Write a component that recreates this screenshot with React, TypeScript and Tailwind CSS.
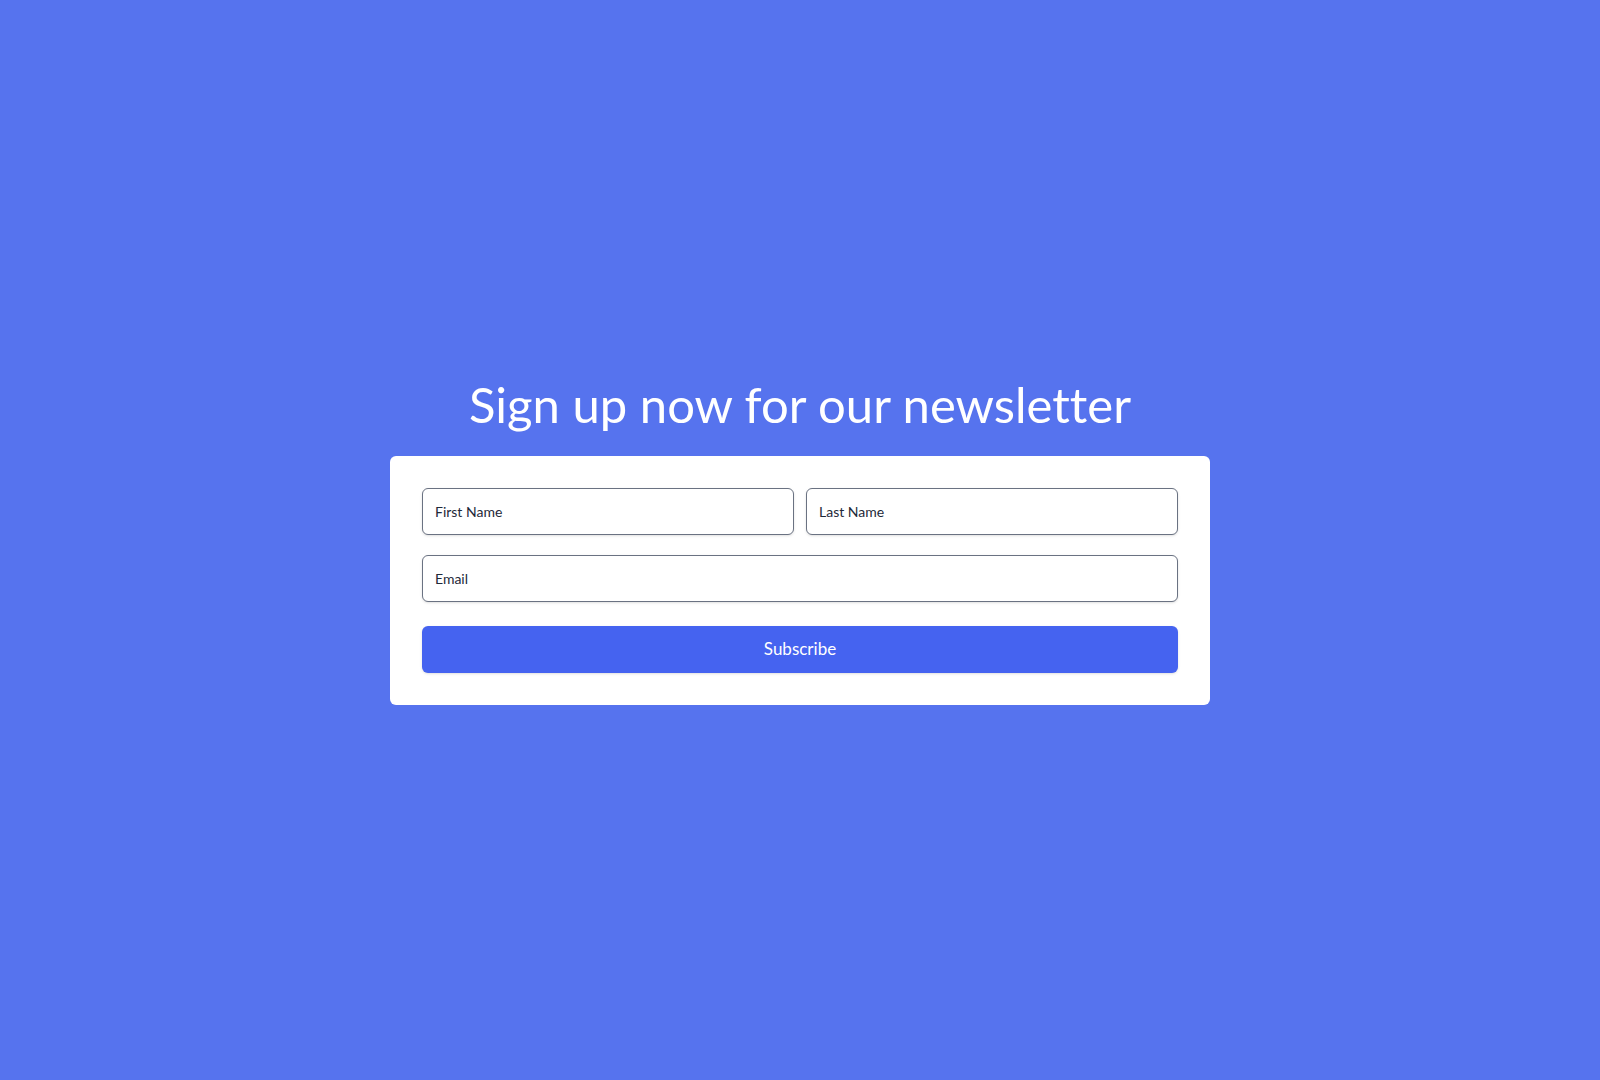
import React from 'react';

const Title: React.FC = () => {
  return (
    <h1 className="text-[49px] leading-[48px] font-normal text-white text-center mb-7 [font-variant-ligatures:none]">
      Sign up now for our newsletter
    </h1>
  );
};

const TextInput: React.FC<{ placeholder: string; type?: string }> = ({ placeholder, type = 'text' }) => {
  return (
    <input
      type={type}
      placeholder={placeholder}
      className="w-full h-[47px] px-3 border border-gray-500 rounded-md bg-white text-sm text-gray-800 placeholder-gray-800 shadow-sm focus:outline-none"
    />
  );
};

const SignupForm: React.FC = () => {
  return (
    <form className="w-[820px] bg-white rounded-md p-8" onSubmit={(e) => e.preventDefault()}>
      <div className="grid grid-cols-2 gap-3">
        <TextInput placeholder="First Name" />
        <TextInput placeholder="Last Name" />
      </div>
      <div className="mt-5">
        <TextInput placeholder="Email" type="email" />
      </div>
      <button
        type="submit"
        className="mt-6 w-full h-[47px] bg-[#4563f0] text-white text-[17px] rounded-md shadow-sm"
      >
        Subscribe
      </button>
    </form>
  );
};

const App: React.FC = () => {
  return (
    <div className="min-h-screen pt-1 bg-[#5673ee] flex flex-col items-center justify-center font-['Lato',sans-serif]">
      <Title />
      <SignupForm />
    </div>
  );
};

export default App;
